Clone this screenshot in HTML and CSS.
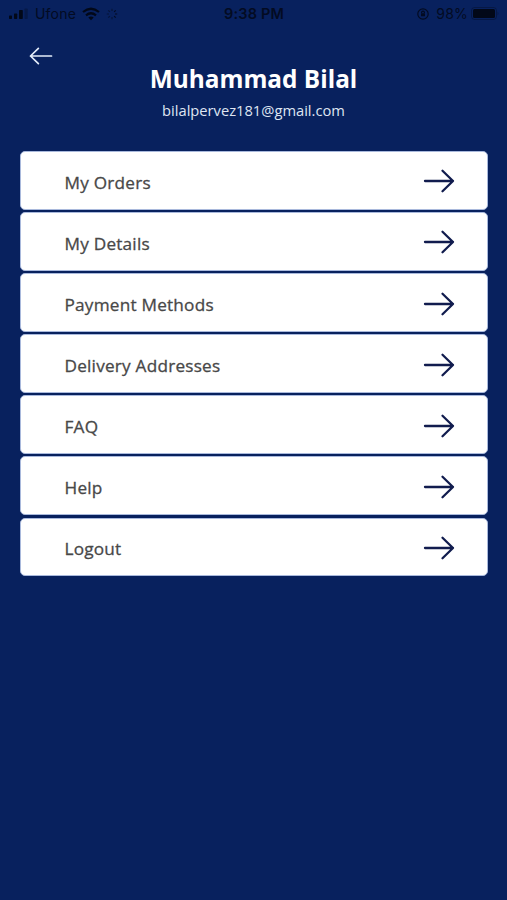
FILE: index.html
```
<!DOCTYPE html>
<html lang="en">

<head>
    <meta charset="UTF-8">
    <meta name="viewport" content="width=device-width, initial-scale=1.0">
    <title>Profile</title>
    <link rel="stylesheet" href="styles.css">
</head>

<body>
    <svg class="symbols" width="0" height="0">
        <symbol id="arrow" viewBox="0 0 32 24">
            <path d="M2 12H30M19.5 1.8L30 12L19.5 22.2" />
        </symbol>
    </svg>

    <div class="status-bar">
        <div class="status-left">
            <svg class="signal" width="20" height="12" viewBox="0 0 20 12">
                <rect x="0" y="7.5" width="3" height="3.5" rx="0.7" />
                <rect x="5" y="5.5" width="3.2" height="5.5" rx="0.7" />
                <rect x="10" y="2" width="3.8" height="9" rx="0.7" />
                <rect class="weak" x="15.5" y="0.5" width="3.2" height="10.5" rx="0.7" />
            </svg>
            <span class="carrier">Ufone</span>
            <svg class="wifi" width="18" height="14" viewBox="0 0 18 14">
                <path d="M1 5Q9 -1.5 17 5M4 8.3Q9 4.2 14 8.3" />
                <path class="dot" d="M6.3 10.5Q9 8.7 11.7 10.5L9 13.2Z" />
            </svg>
            <svg class="spinner" width="12" height="12" viewBox="0 0 12 12">
                <path class="faded" d="M6 0.8V3M2.3 2.3L3.8 3.8M0.8 6H3M2.3 9.7L3.8 8.2M6 9V11.2" />
                <path d="M9.7 2.3L8.2 3.8M11.2 6H9M9.7 9.7L8.2 8.2" />
            </svg>
        </div>
        <div class="time">9:38 PM</div>
        <div class="status-right">
            <svg class="lock" width="12" height="12" viewBox="0 0 12 12">
                <circle cx="6" cy="6" r="5.2" />
                <path d="M4.6 5.2V4.5A1.4 1.4 0 0 1 7.4 4.5V5.2" />
                <rect x="4" y="5.2" width="4" height="3" rx="0.5" />
            </svg>
            <span class="percent">98%</span>
            <svg class="battery" width="28" height="13" viewBox="0 0 28 13">
                <rect class="shell" x="0.5" y="0.5" width="25" height="12" rx="3" />
                <rect x="2" y="2" width="22" height="9" rx="1.5" />
                <path class="weak" d="M26.5 4.5Q28.5 6.5 26.5 8.5Z" />
            </svg>
        </div>
    </div>

    <header class="header">
        <a href="#" class="back" aria-label="Back">
            <svg class="back-icon" width="24" height="18">
                <use href="#arrow" />
            </svg>
        </a>
        <h1>Muhammad Bilal</h1>
        <p class="email">bilalpervez181@gmail.com</p>
    </header>

    <nav class="menu">
        <a href="#" class="menu-item">
            <span class="label">My Orders</span>
            <svg class="arrow"><use href="#arrow" /></svg>
        </a>
        <a href="#" class="menu-item">
            <span class="label">My Details</span>
            <svg class="arrow"><use href="#arrow" /></svg>
        </a>
        <a href="#" class="menu-item">
            <span class="label">Payment Methods</span>
            <svg class="arrow"><use href="#arrow" /></svg>
        </a>
        <a href="#" class="menu-item">
            <span class="label">Delivery Addresses</span>
            <svg class="arrow"><use href="#arrow" /></svg>
        </a>
        <a href="#" class="menu-item">
            <span class="label">FAQ</span>
            <svg class="arrow"><use href="#arrow" /></svg>
        </a>
        <a href="#" class="menu-item">
            <span class="label">Help</span>
            <svg class="arrow"><use href="#arrow" /></svg>
        </a>
        <a href="#" class="menu-item">
            <span class="label">Logout</span>
            <svg class="arrow"><use href="#arrow" /></svg>
        </a>
    </nav>
</body>

</html>
```

FILE: styles.css
```
body {
    margin: 0;
    min-height: 100vh;
    background-color: #08215e;
    font-family: "Open Sans", "Noto Sans", sans-serif;
}

.symbols {
    display: block;
}

.status-bar {
    display: grid;
    grid-template-columns: 1fr auto 1fr;
    align-items: center;
    height: 28px;
    padding: 0 8px 1px 9px;
    box-sizing: border-box;
    font-family: Inter, sans-serif;
    font-size: 14px;
    color: #030b22;
}

.status-left,
.status-right {
    display: flex;
    align-items: center;
}

.status-right {
    justify-content: flex-end;
}

.signal,
.battery {
    fill: #020818;
}

.weak {
    opacity: 0.3;
}

.faded {
    opacity: 0.6;
}

.carrier {
    margin-left: 6px;
    letter-spacing: 0.2px;
}

.wifi {
    margin-left: 6px;
    fill: none;
    stroke: #020818;
    stroke-width: 2.2;
}

.wifi .dot {
    fill: #020818;
    stroke: none;
}

.spinner {
    margin-left: 6px;
    fill: none;
    stroke: #030b22;
    stroke-width: 1.2;
}

.time {
    font-size: 14.5px;
    font-weight: 600;
    letter-spacing: 0.2px;
}

.lock {
    fill: none;
    stroke: #030b22;
    stroke-width: 1.2;
}

.lock rect {
    fill: #030b22;
    stroke: none;
}

.percent {
    margin: 0 3px 0 7px;
    letter-spacing: 0.2px;
}

.battery .shell {
    fill: none;
    stroke: #020818;
    stroke-opacity: 0.35;
}

.header {
    height: 123px;
    text-align: center;
}

.back {
    display: block;
    width: 24px;
    height: 18px;
    margin-left: 29px;
    padding-top: 19px;
}

.back-icon {
    display: block;
    transform: scaleX(-1);
    fill: none;
    stroke: #e4edfa;
    stroke-width: 2.3;
    stroke-linecap: round;
    stroke-linejoin: round;
}

h1 {
    margin: 0;
    font-size: 24.4px;
    font-weight: 700;
    line-height: 28px;
    color: #fff;
}

.email {
    margin: 7px 0 0;
    font-size: 14.7px;
    line-height: 20px;
    color: #dfe5f2;
}

.menu {
    display: flex;
    flex-direction: column;
    gap: 2.3px;
    padding: 0 19px 0 20px;
}

.menu-item {
    display: flex;
    align-items: center;
    justify-content: space-between;
    height: 58.8px;
    padding: 2px 32px 0 43.5px;
    box-sizing: border-box;
    border: 1px solid #a9b9dc;
    border-radius: 5px;
    background-color: #fff;
    font-size: 17.2px;
    letter-spacing: 0.22px;
    color: #484848;
    text-decoration: none;
}

.label {
    padding-top: 2px;
    -webkit-text-stroke: 0.3px #484848;
}

.arrow {
    width: 32px;
    height: 24px;
    fill: none;
    stroke: #111c4e;
    stroke-width: 2.3;
    stroke-linecap: round;
    stroke-linejoin: round;
}
```
